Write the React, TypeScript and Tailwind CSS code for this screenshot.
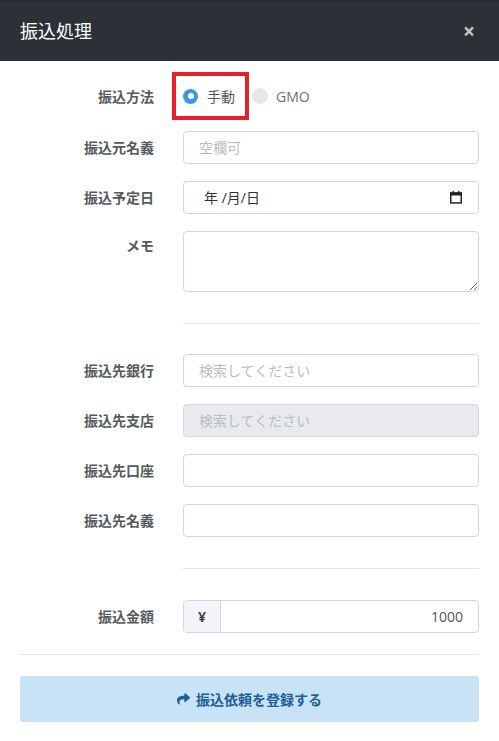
import React from 'react';

const font = { fontFamily: '"Open Sans", "Noto Sans CJK JP", sans-serif' };

const Row: React.FC<{ label: string; children: React.ReactNode; top?: boolean; className?: string }> = ({ label, children, top, className = '' }) => (
  <div className={`flex ${top ? 'items-start' : 'items-center'} ${className}`}>
    <div className={`w-[154px] text-right text-[14px] font-bold text-[#555a60] ${top ? 'pt-[4px]' : ''}`}>{label}</div>
    <div className="ml-[29px] w-[296px]">{children}</div>
  </div>
);

const base =
  'w-full h-[33px] rounded-[4px] border border-[#d3d6e2] px-[15px] text-[14px] text-[#555] placeholder:text-[#b8bcc4] outline-none';

export default function App() {
  return (
    <div className="w-[499px] h-[741px] bg-white" style={font}>
      <div className="h-[61px] bg-[#2c3137] border-t-[2px] border-[#1e2d3b] flex items-center justify-between pl-[20px] pr-[24px]">
        <h1 className="text-[18px] text-white font-normal">振込処理</h1>
        <span className="text-[#c3c6ca] text-[21px] font-bold leading-none">×</span>
      </div>

      <div className="flex flex-col gap-[17px] pt-[19px]">
        <Row label="振込方法" className="mb-[2px]">
          <div className="flex items-center h-[32px] -ml-[11px]">
            <div className="flex items-center gap-[9px] border-[4px] border-[#e81f28] h-[48px] w-[77px] pl-[7px]">
              <span className="w-[15px] h-[15px] rounded-full bg-[#3a97e0] flex items-center justify-center">
                <span className="w-[6px] h-[6px] rounded-full bg-white" />
              </span>
              <span className="text-[14px] text-[#555]">手動</span>
            </div>
            <div className="flex items-center gap-[8px] ml-[3px]">
              <span className="w-[16px] h-[16px] rounded-full bg-[#e4e7eb]" />
              <span className="text-[14px] text-[#6c7075]">GMO</span>
            </div>
          </div>
        </Row>
        <Row label="振込元名義">
          <input className={`${base} bg-white`} placeholder="空欄可" />
        </Row>
        <Row label="振込予定日">
          <div className={`${base} bg-white flex items-center justify-between pl-[20px] pr-[16px]`}>
            <span className="text-[14px] text-[#333]">年 /月/日</span>
            <svg width="12" height="13" viewBox="0 0 12 13">
              <rect x="0.75" y="2" width="10.5" height="10" fill="none" stroke="#222" strokeWidth="1.5" />
              <rect x="0" y="1.5" width="12" height="3" fill="#222" />
              <rect x="2.5" y="0" width="1.5" height="2" fill="#222" />
              <rect x="8" y="0" width="1.5" height="2" fill="#222" />
            </svg>
          </div>
        </Row>
        <Row label="メモ" top>
          <textarea className="w-full h-[61px] block rounded-[4px] border border-[#d3d6e2] bg-white px-[15px] py-[6px] text-[14px] outline-none" />
        </Row>
      </div>

      <div className="ml-[183px] mr-[20px] mt-[31px] mb-[30px] border-t border-[#e3e5ea]" />

      <div className="flex flex-col gap-[17px]">
        <Row label="振込先銀行">
          <input className={`${base} bg-white`} placeholder="検索してください" />
        </Row>
        <Row label="振込先支店">
          <input className={`${base} bg-[#e8eaee]`} placeholder="検索してください" disabled />
        </Row>
        <Row label="振込先口座">
          <input className={`${base} bg-white`} />
        </Row>
        <Row label="振込先名義">
          <input className={`${base} bg-white`} />
        </Row>
      </div>

      <div className="ml-[183px] mr-[20px] mt-[31px] mb-[31px] border-t border-[#e3e5ea]" />

      <Row label="振込金額">
        <div className="flex h-[33px] rounded-[4px] border border-[#d3d6e2] overflow-hidden">
          <div className="w-[37px] bg-[#f4f5f8] border-r border-[#d3d6e2] flex items-center justify-center text-[14px] font-bold text-[#444]">¥</div>
          <input className="flex-1 min-w-0 text-right px-[15px] text-[14px] text-[#555] outline-none" defaultValue="1000" />
        </div>
      </Row>

      <div className="mx-[20px] mt-[21px] mb-[21px] border-t border-[#e3e5ea]" />

      <div className="mx-[20px]">
        <button className="w-full h-[46px] rounded-[3px] bg-[#c8e2f6] flex items-center justify-center gap-[6px] text-[14px] font-bold text-[#1f5f99]">
          <svg width="13" height="12" viewBox="0 0 512 448">
            <path
              fill="#1f5f99"
              d="M503.7 153.9l-176-152C312.3-11.5 288 -0.6 288 20.3v80.1C127.4 102.2 0 134.4 0 286.7c0 61.4 39.6 122.3 83.3 154.1 13.7 9.9 33.1-2.5 28.1-18.6C66 276.8 132.9 238 288 235.8V324c0 20.9 24.3 31.8 39.9 18.3l176-152c11.1-9.6 11.1-26.8-.2-36.4z"
            />
          </svg>
          振込依頼を登録する
        </button>
      </div>
    </div>
  );
}
